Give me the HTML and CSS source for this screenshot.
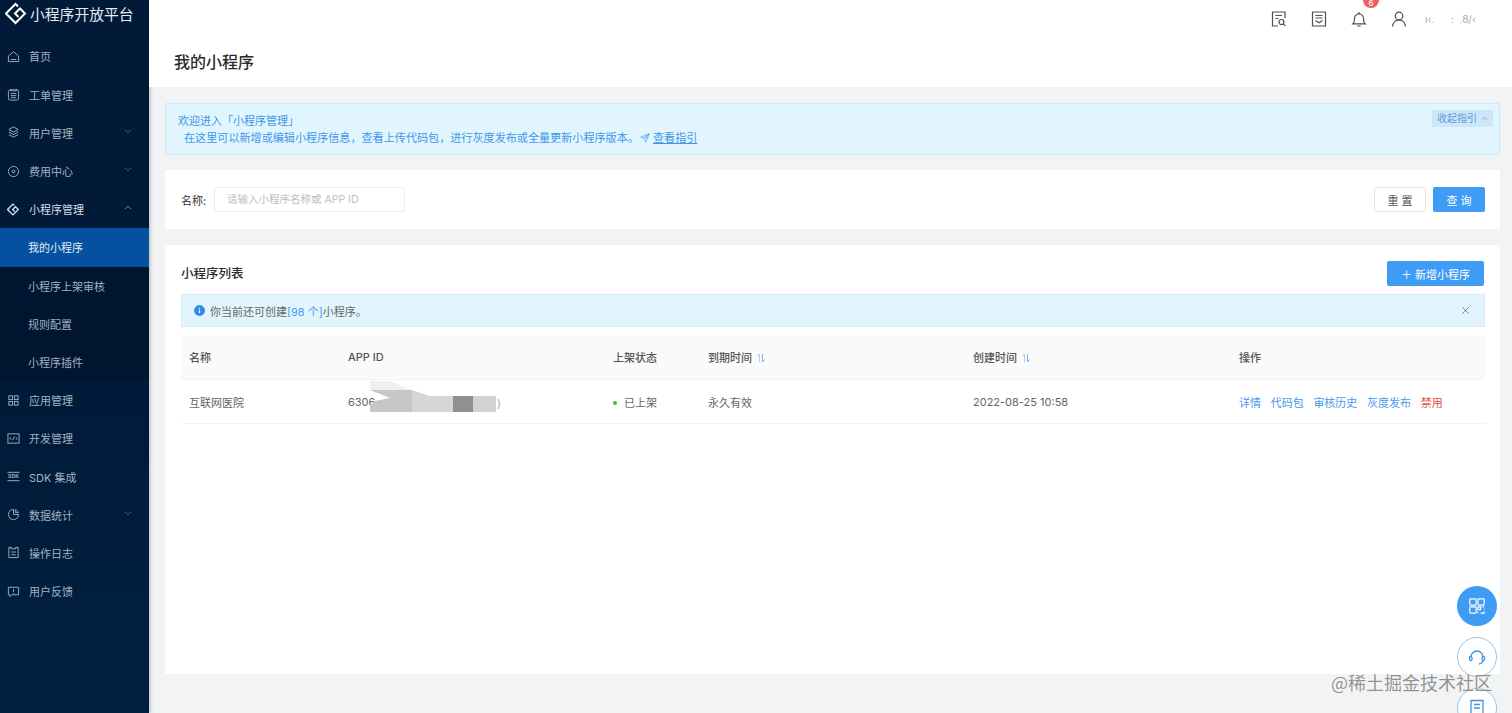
FILE: index.html
```html
<!DOCTYPE html>
<html lang="zh-CN">
<head>
    <meta charset="UTF-8">
    <title>我的小程序</title>
    <link rel="stylesheet" href="styles.css">
</head>
<body>
    <aside class="sidebar">
        <div class="logo">
            <svg class="logo-icon" viewBox="0 0 23 23"><path d="M13 4.500 10.500 2 1 11.500 10.500 21 20 11.500 15 6.500 10 11.500 13.500 15"/></svg>
            <span>小程序开放平台</span>
        </div>
        <nav class="menu">
            <a class="menu-item"><svg class="mi" viewBox="0 0 14 14"><path d="M1.500 6.500 7 1.800l5.500 4.700v6h-11zM4 10.300h6"/></svg>首页</a>
            <a class="menu-item"><svg class="mi" viewBox="0 0 14 14"><rect x="1.500" y="2" width="11" height="11" rx="2"/><path d="M4 1v2h6V1M4 6h6M4 8.200h6M4 10.400h6"/></svg>工单管理</a>
            <a class="menu-item"><svg class="mi" viewBox="0 0 14 14"><path d="M7 1 12 3.800 7 6.500 2 3.800zM2 6.500l5 2.700 5-2.700M2 9.300 7 12l5-2.700"/></svg>用户管理<svg class="arrow" viewBox="0 0 10 6"><path d="m1 1 4 3.500L9 1"/></svg></a>
            <a class="menu-item"><svg class="mi" viewBox="0 0 14 14"><circle cx="7" cy="7" r="5.500"/><circle cx="7" cy="7" r="1.500"/></svg>费用中心<svg class="arrow" viewBox="0 0 10 6"><path d="m1 1 4 3.500L9 1"/></svg></a>
            <a class="menu-item open"><svg class="mi" viewBox="0 0 23 23"><path d="M13 4.500 10.500 2 1 11.500 10.500 21 20 11.500 15 6.500 10 11.500 13.500 15" stroke-width="2.400"/></svg>小程序管理<svg class="arrow" viewBox="0 0 10 6"><path d="m1 5 4-3.500L9 5"/></svg></a>
            <div class="submenu">
                <a class="sub-item active">我的小程序</a>
                <a class="sub-item">小程序上架审核</a>
                <a class="sub-item">规则配置</a>
                <a class="sub-item">小程序插件</a>
            </div>
            <a class="menu-item"><svg class="mi" viewBox="0 0 14 14"><rect x="2" y="2" width="4" height="4"/><rect x="8" y="2" width="4" height="4"/><rect x="2" y="8" width="4" height="4"/><rect x="8" y="8" width="4" height="4"/></svg>应用管理</a>
            <a class="menu-item"><svg class="mi" viewBox="0 0 14 14"><rect x="1" y="2" width="12" height="10"/><path d="M4.500 5.500 3 7l1.500 1.500M9.500 5.500 11 7 9.500 8.500M8 5 6 9"/></svg>开发管理</a>
            <a class="menu-item"><svg class="mi" viewBox="0 0 14 14"><path d="M0.500 2.500h13M0.500 11.500h13"/><text x="7" y="9" class="sdk-text">SDK</text></svg>SDK 集成</a>
            <a class="menu-item"><svg class="mi" viewBox="0 0 14 14"><path d="M12.500 7A5.500 5.500 0 1 1 7 1.500V7z"/><path d="M9 1.800A5 5 0 0 1 12.300 5H9z"/></svg>数据统计<svg class="arrow" viewBox="0 0 10 6"><path d="m1 1 4 3.500L9 1"/></svg></a>
            <a class="menu-item"><svg class="mi" viewBox="0 0 14 14"><path d="M4.500 1.500H2v11h10v-11H9.500M4.500 1v2h5V1M4.500 6.500h5M4.500 9.500h5"/></svg>操作日志</a>
            <a class="menu-item"><svg class="mi" viewBox="0 0 14 14"><path d="M1.500 2.500h11v8H5l-2 2v-2H1.500zM7 4.500v3M7 8.500v.8"/></svg>用户反馈</a>
        </nav>
    </aside>

    <div class="main">
        <header class="topbar">
            <svg class="top-icon" viewBox="0 0 16 16"><path d="M14 7V1H1.500v14H7M4.500 4.500h6.500M4.500 7.500h3"/><circle cx="10.500" cy="11" r="2.500"/><path d="m12.300 12.800 2 2"/></svg>
            <svg class="top-icon" viewBox="0 0 16 16"><path d="M1.500 1h13v14h-13zM4.500 4.500h7M4.500 7h7M4.500 9.500l3.500 2.300 3.500-2.300"/></svg>
            <span class="bell">
                <svg class="top-icon" viewBox="0 0 16 16"><path d="M2 12.800c1.200-1 1.500-2.500 1.500-5.300C3.500 4.800 5.500 2.800 8 2.800s4.500 2 4.500 4.700c0 2.800.3 4.300 1.500 5.300zM8 1v1.800M6.300 15h3.400"/></svg>
                <span class="badge">6</span>
            </span>
            <svg class="top-icon" viewBox="0 0 16 16"><circle cx="8" cy="5" r="3.800"/><path d="M1.500 15.500c.5-4 3.200-6.700 6.500-6.700s6 2.700 6.500 6.700"/></svg>
            <span class="username">ı‹.&nbsp;&nbsp;&nbsp;&nbsp;&nbsp;&nbsp;:&nbsp;&nbsp;.8/‹</span>
        </header>

        <div class="page-head">我的小程序</div>

        <div class="content">
            <section class="guide">
                <button class="guide-toggle">收起指引 <svg class="guide-arrow" viewBox="0 0 10 6"><path d="m1 5 4-3.500L9 5"/></svg></button>
                <p>欢迎进入「小程序管理」</p>
                <p class="guide-text">在这里可以新增或编辑小程序信息，查看上传代码包，进行灰度发布或全量更新小程序版本。<svg class="send" viewBox="0 0 12 12"><path d="M11 1 1 5l3 1.500L11 1 5.500 8 7 11z"/></svg> <a class="guide-link">查看指引</a></p>
            </section>

            <section class="card search">
                <label class="search-label">名称:</label>
                <div class="search-input">请输入小程序名称或 APP ID</div>
                <div class="spacer"></div>
                <button class="btn">重 置</button>
                <button class="btn primary">查 询</button>
            </section>

            <section class="card list">
                <div class="list-head">
                    <h2>小程序列表</h2>
                    <button class="btn primary add">＋ 新增小程序</button>
                </div>
                <div class="notice">
                    <svg class="info" viewBox="0 0 12 12"><circle cx="6" cy="6" r="5.500"/><path d="M6 5.200v3.600M6 3v1.200"/></svg>
                    <span>你当前还可创建<em>[98 个]</em>小程序。</span>
                    <svg class="close" viewBox="0 0 10 10"><path d="m1.500 1.500 7 7M8.500 1.500l-7 7"/></svg>
                </div>
                <table class="table">
                    <colgroup>
                        <col class="c-name"><col class="c-id"><col class="c-status"><col class="c-expire"><col class="c-created"><col>
                    </colgroup>
                    <thead>
                        <tr>
                            <th>名称</th>
                            <th>APP ID</th>
                            <th>上架状态</th>
                            <th>到期时间<svg class="sort" viewBox="0 0 10 10"><path d="M3.500 9V1L1.500 3.500"/><path class="sort-down" d="M6.500 1v8l2-2.500"/></svg></th>
                            <th>创建时间<svg class="sort" viewBox="0 0 10 10"><path d="M3.500 9V1L1.500 3.500"/><path class="sort-down" d="M6.500 1v8l2-2.500"/></svg></th>
                            <th>操作</th>
                        </tr>
                    </thead>
                    <tbody>
                        <tr>
                            <td>互联网医院</td>
                            <td class="app-id">6306<span class="app-id-end">)</span>
                                <svg class="smudge" viewBox="0 0 130 34">
                                    <path fill="#efefef" d="M1 1h20l33 15H21L1 9z"/>
                                    <path fill="#c6c6c6" d="M1 10h42v22H1v-6l5-5 15-3z"/>
                                    <path fill="#d6d6d6" d="M43 10l17 6h25v16H43z"/>
                                    <rect x="84" y="16" width="20" height="16" fill="#909090"/>
                                    <rect x="104" y="16" width="23" height="16" fill="#d2d2d2"/>
                                </svg>
                            </td>
                            <td><i class="dot"></i>已上架</td>
                            <td>永久有效</td>
                            <td>2022-08-25 10:58</td>
                            <td class="ops"><a>详情</a><a>代码包</a><a>审核历史</a><a>灰度发布</a><a class="danger">禁用</a></td>
                        </tr>
                    </tbody>
                </table>
            </section>
        </div>
    </div>

    <div class="float-btns">
        <a class="float-btn solid"><svg viewBox="0 0 20 20"><rect x="2" y="2" width="7" height="7" rx="1"/><rect x="11" y="2" width="7" height="7" rx="1"/><rect x="2" y="11" width="7" height="7" rx="1"/><path d="M11 11h3v3h-3zM16 11h2M18 14v-1M11 18v-2M14 18h4v-2"/></svg></a>
        <a class="float-btn"><svg viewBox="0 0 20 20"><path d="M4 10a6 6 0 0 1 12 0M16 13c0 2-1.500 3.500-4 4"/><rect x="2.500" y="9.500" width="2.500" height="4" rx="1.200"/><rect x="15" y="9.500" width="2.500" height="4" rx="1.200"/></svg></a>
        <a class="float-btn"><svg viewBox="0 0 20 20"><path d="M4 2.500h12v15H4zM7 6.500h6M7 10h6"/></svg></a>
    </div>
    <div class="watermark">@稀土掘金技术社区</div>
</body>
</html>
```

FILE: styles.css
```css
* {
    box-sizing: border-box;
    margin: 0;
    padding: 0;
}

html, body {
    height: 713px;
    overflow: hidden;
}

body {
    display: flex;
    font-family: Inter, 'Noto Sans CJK SC', sans-serif;
    font-size: 11px;
    color: #5f6368;
    background: #f2f3f5;
}

svg {
    fill: none;
    stroke: currentColor;
}

/* sidebar */
.sidebar {
    width: 149px;
    height: 713px;
    flex: none;
    background: linear-gradient(#001a38, #001a38 45%, #00203f);
    box-shadow: 1px 0 4px rgba(0,0,0,0.25);
    color: #a3b1c2;
}

.logo {
    display: flex;
    align-items: center;
    height: 27px;
    padding-left: 5px;
    gap: 2px;
    font-size: 14.800px;
    color: #e6ebf1;
}

.logo-icon {
    width: 23px;
    height: 23px;
    stroke: #fff;
    stroke-width: 2;
}

.menu {
    margin-top: 10.400px;
}

.menu-item {
    position: relative;
    display: flex;
    align-items: center;
    height: 38.200px;
    padding-left: 7px;
}

.menu-item.open {
    color: #d5dde6;
}

.mi {
    width: 13px;
    height: 13px;
    margin-right: 9px;
    stroke-width: 1;
}

.sdk-text {
    font-family: 'Liberation Sans', sans-serif;
    font-size: 5.500px;
    font-weight: 700;
    text-anchor: middle;
    fill: currentColor;
    stroke: none;
}

.arrow {
    position: absolute;
    right: 17px;
    top: 15px;
    width: 8px;
    height: 5px;
    stroke: #56687d;
}

.open .arrow {
    stroke: #8495a8;
}

.submenu {
    background: #001530;
}

.sub-item {
    display: flex;
    align-items: center;
    height: 38.200px;
    padding-left: 28px;
}

.sub-item.active {
    background: #04519f;
    color: #e6edf5;
}

/* top */
.main {
    flex: 1;
    min-width: 0;
}

.topbar {
    display: flex;
    align-items: center;
    justify-content: flex-end;
    gap: 24px;
    height: 38px;
    padding-right: 27px;
    background: #fff;
    box-shadow: 0 1px 2px rgba(0,0,0,0.06);
    color: #4f4f4f;
}

.top-icon {
    width: 16px;
    height: 16px;
    display: block;
    stroke-width: 1.200;
}

.bell {
    position: relative;
}

.badge {
    position: absolute;
    left: 12px;
    top: -19px;
    width: 16px;
    height: 16px;
    border-radius: 50%;
    background: #ee5f5f;
    color: #fff;
    font-size: 8px;
    line-height: 23px;
    text-align: center;
}

.username {
    width: 60px;
    margin-left: -6px;
    font-size: 10px;
    color: #aaa;
    white-space: nowrap;
}

.page-head {
    height: 49px;
    padding-left: 25px;
    background: #fff;
    font-size: 16px;
    font-weight: 500;
    line-height: 48px;
    color: #2b2b2b;
}

/* content */
.content {
    padding: 16px 12px 0 16px;
}

.guide {
    position: relative;
    height: 52px;
    padding: 9px 12px;
    background: #e1f5ff;
    border: 1px solid #c8e9fa;
    border-radius: 2px;
    color: #3f97e8;
    line-height: 17px;
}

.guide-text {
    padding-left: 6px;
    font-size: 11.100px;
}

.guide-toggle {
    position: absolute;
    top: 6px;
    right: 6px;
    display: flex;
    align-items: center;
    gap: 4px;
    height: 17px;
    padding: 0 5px;
    border: none;
    background: #cfe6f9;
    color: #5a9bdd;
    font: inherit;
    font-size: 10px;
}

.guide-arrow {
    width: 7px;
    height: 5px;
}

.send {
    width: 10px;
    height: 10px;
    margin-left: 1px;
    stroke-width: 0.8;
    vertical-align: -1px;
}

.guide-link {
    text-decoration: underline;
}

.card {
    background: #fff;
}

.search {
    display: flex;
    align-items: center;
    height: 59px;
    margin-top: 15px;
    padding: 0 15px 0 16px;
}

.search-label {
    width: 33px;
    color: #333;
}

.search-input {
    width: 191px;
    height: 25px;
    padding-left: 12px;
    border: 1px solid #ececec;
    border-radius: 2px;
    font-size: 10.500px;
    line-height: 23px;
    color: #bdbdbd;
}

.spacer {
    flex: 1;
}

.btn {
    width: 52px;
    height: 25px;
    margin-left: 7px;
    border: 1px solid #e6e6e6;
    border-radius: 2px;
    background: #fff;
    color: #555;
    font: inherit;
}

.btn.primary {
    border: none;
    background: #3f9cf5;
    color: #fff;
}

.list {
    height: 429px;
    margin-top: 16px;
    padding: 16px 15px 0 16px;
}

.list-head {
    display: flex;
    align-items: center;
    justify-content: space-between;
    height: 25px;
}

.list-head h2 {
    margin-top: -2px;
    font-size: 12.500px;
    font-weight: 500;
    color: #2b2b2b;
}

.btn.add {
    width: 97px;
    margin: 0 1px 0 0;
}

.notice {
    display: flex;
    align-items: center;
    height: 33px;
    margin-top: 8px;
    padding: 0 14px 0 12px;
    background: #e2f4fe;
    border: 1px solid #d3ebf8;
    color: #666;
}

.notice span {
    flex: 1;
    margin-left: 5px;
}

.notice em {
    font-style: normal;
    color: #4a9bec;
}

.info {
    width: 11px;
    height: 11px;
}

.info circle {
    fill: #2f8de4;
    stroke: #2f8de4;
}

.info path {
    stroke: #fff;
    stroke-width: 1.200;
}

.close {
    width: 9px;
    height: 9px;
    color: #777;
}

/* table */
.table {
    width: 100%;
    margin-top: 8px;
    border-collapse: collapse;
    table-layout: fixed;
}

.c-name { width: 159px; }
.c-id { width: 265px; }
.c-status { width: 95px; }
.c-expire { width: 265px; }
.c-created { width: 266px; }

.table th {
    height: 44px;
    padding-left: 8px;
    background: #fafafa;
    border-bottom: 1px solid #f3f3f3;
    font-weight: 500;
    text-align: left;
    color: #555;
}

.table td {
    height: 44px;
    padding: 1px 0 0 8px;
    border-bottom: 1px solid #f3f3f3;
    color: #666;
}

.sort {
    width: 10px;
    height: 10px;
    margin-left: 4px;
    vertical-align: -1px;
    color: #a5cdf3;
}

.sort-down {
    stroke: #6fb0ee;
}

.app-id {
    position: relative;
}

.app-id-end {
    position: absolute;
    left: 157px;
    top: 16px;
    color: #aaa;
}

.smudge {
    position: absolute;
    left: 29px;
    top: 0;
    width: 130px;
    height: 34px;
    stroke: none;
    filter: blur(0.5px);
}

.dot {
    display: inline-block;
    width: 4px;
    height: 4px;
    margin-right: 7px;
    border-radius: 50%;
    background: #52b12c;
    vertical-align: 2px;
}

.ops a {
    margin-right: 9.700px;
    color: #4a9bec;
}

.ops a.danger {
    color: #e2504f;
}

/* floating stuff */
.float-btns {
    position: absolute;
    top: 586px;
    right: 15px;
    display: flex;
    flex-direction: column;
    gap: 11px;
}

.float-btn {
    display: flex;
    align-items: center;
    justify-content: center;
    width: 40px;
    height: 40px;
    border: 1px solid #9fc3dc;
    border-radius: 50%;
    background: #fff;
    color: #3f94dc;
}

.float-btn.solid {
    border: none;
    background: #3f9cf5;
    color: #fff;
}

.float-btn svg {
    width: 20px;
    height: 20px;
    stroke-width: 1.300;
}

.float-btn.solid svg {
    width: 18px;
    height: 18px;
}

.watermark {
    position: absolute;
    left: 1331px;
    top: 669px;
    font-family: 'Noto Sans CJK SC', sans-serif;
    font-size: 18px;
    line-height: 26px;
    white-space: nowrap;
    color: rgba(110,110,110,0.75);
    text-shadow: 0 0 1px rgba(255,255,255,0.7);
}
```
